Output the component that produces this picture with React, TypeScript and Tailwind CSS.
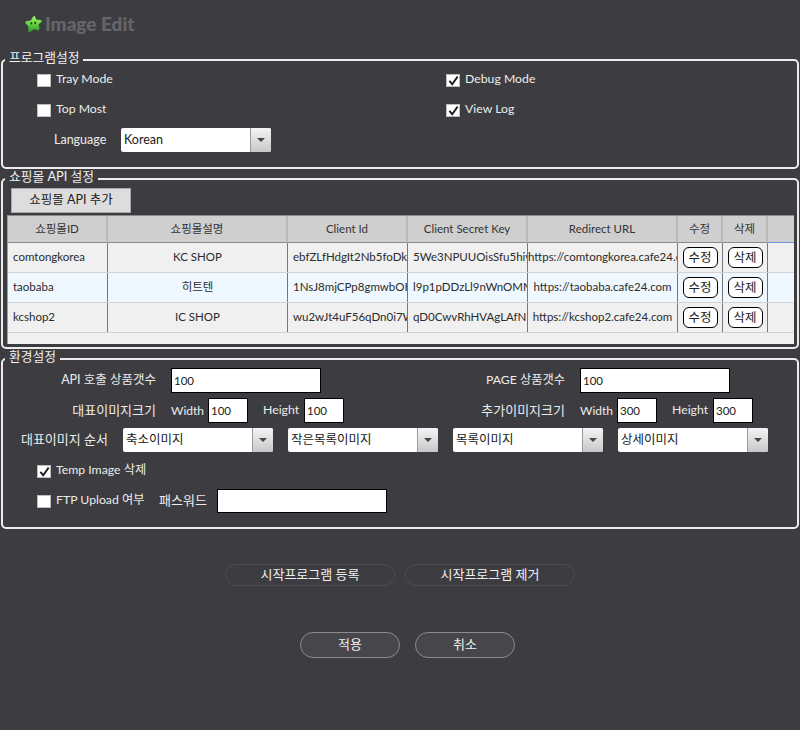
import type { ReactNode } from 'react'

const FONT = 'font-[Lato,"Noto_Sans_CJK_KR",sans-serif]'

const SHOPS = [
  {
    id: 'comtongkorea',
    name: 'KC SHOP',
    clientId: 'ebfZLfHdgIt2Nb5foDkpQ',
    secret: '5We3NPUUOisSfu5hiypXk2',
    url: 'https://comtongkorea.cafe24.com',
    bg: 'bg-[#f0f0f0]',
  },
  {
    id: 'taobaba',
    name: '히트텐',
    clientId: '1NsJ8mjCPp8gmwbOK8aT',
    secret: 'l9p1pDDzLl9nWnOMMvRe',
    url: 'https://taobaba.cafe24.com',
    bg: 'bg-[#f0f8ff]',
  },
  {
    id: 'kcshop2',
    name: 'IC SHOP',
    clientId: 'wu2wJt4uF56qDn0i7WtLc',
    secret: 'qD0CwvRhHVAgLAfNK8sY',
    url: 'https://kcshop2.cafe24.com',
    bg: 'bg-[#f0f0f0]',
  },
]

const HEADERS = ['쇼핑몰ID', '쇼핑몰설명', 'Client Id', 'Client Secret Key', 'Redirect URL', '수정', '삭제']

const TABLE_COLS = 'grid grid-cols-[100px_180px_120px_120px_150px_45px_45px_27px]'

function Group({ title, children }: { title: string; children: ReactNode }) {
  return (
    <fieldset className="mx-px min-w-0 rounded-[5px] border-2 border-[#ececec]">
      <legend className="ml-[2px] h-[18px] px-[4px] text-[12.75px] leading-[12px] text-[#f2f2f2]">{title}</legend>
      {children}
    </fieldset>
  )
}

function Check({ label, checked = false, className = '' }: { label: string; checked?: boolean; className?: string }) {
  return (
    <div className={`flex h-[13px] items-center ${className}`}>
      <span className="flex h-[13px] w-[14px] shrink-0 items-center justify-center border border-[#bdbdbd] bg-white">
        {checked && (
          <svg viewBox="0 0 12 12" className="h-[11px] w-[11px]">
            <path d="M1.5 6.5 L4.6 10 L10.5 1.8" fill="none" stroke="#1b1b1b" strokeWidth="2" />
          </svg>
        )}
      </span>
      <span className="ml-[5px] -translate-y-px whitespace-nowrap text-[12.25px] text-[#ececec]">{label}</span>
    </div>
  )
}

function Select({ value, className = '' }: { value: string; className?: string }) {
  return (
    <div className={`flex h-[24px] w-[150px] overflow-hidden rounded-[2px] bg-white ${className}`}>
      <span className="flex-1 pl-[3px] text-[12.5px] leading-[24px] text-[#1a1a1a]">{value}</span>
      <span className="flex w-[21px] items-center justify-center border-l border-[#9a9a9a] bg-gradient-to-b from-[#f4f4f4] to-[#c8c8c8]">
        <svg viewBox="0 0 8 4" className="h-[4px] w-[8px]">
          <path d="M0 0 H8 L4 4 Z" fill="#444" />
        </svg>
      </span>
    </div>
  )
}

function TextBox({ value = '', className }: { value?: string; className: string }) {
  return (
    <div className={`border border-black bg-white pl-[2px] text-[11.5px] leading-[23px] text-[#1a1a1a] ${className}`}>
      {value}
    </div>
  )
}

function Label({ children, className }: { children: ReactNode; className: string }) {
  return <span className={`whitespace-nowrap text-[#ececec] ${className}`}>{children}</span>
}

function SizeFields({ title, titleWidth, size }: { title: string; titleWidth: string; size: string }) {
  return (
    <>
      <Label className={`text-right text-[13px] ${titleWidth}`}>{title}</Label>
      <Label className="ml-[15px] w-[37px] text-[12px]">Width</Label>
      <TextBox value={size} className="h-[25px] w-[40px]" />
      <Label className="ml-[15px] w-[41px] text-[12.25px]">Height</Label>
      <TextBox value={size} className="h-[25px] w-[40px]" />
    </>
  )
}

function RowButton({ label }: { label: string }) {
  return (
    <button className="h-[21px] w-[35px] rounded-[6px] border border-black bg-white text-[12.5px] leading-[17px] text-[#222]">
      {label}
    </button>
  )
}

function OutlineButton({ label, className }: { label: string; className: string }) {
  return <button className={`rounded-full border text-[13px] text-[#f0f0f0] ${className}`}>{label}</button>
}

function Logo() {
  return (
    <svg viewBox="0 0 18 18" className="h-[18px] w-[17px]">
      <defs>
        <linearGradient id="star" x1="0" y1="0" x2="0" y2="1">
          <stop offset="0%" stopColor="#a4f56a" />
          <stop offset="55%" stopColor="#5fd03c" />
          <stop offset="100%" stopColor="#2f8f2c" />
        </linearGradient>
      </defs>
      <path
        d="M9.6 0.4 C10.8 0.2 11 3 11.8 4.2 C13.4 4.4 17.6 4.4 17.8 5.8 C17.8 7 15 8.6 14.4 9.6 C14.8 11.4 16 15 14.6 15.8 C13.2 16.2 11.2 14.6 9.8 14.6 C8 15.6 5 18.2 3.8 17.4 C2.8 16.6 3.8 13 3.6 11.4 C2.2 10 -0.2 8.4 0.4 7 C1 5.8 4.2 5.8 6 5.4 C7 3.8 8.4 0.8 9.6 0.4 Z"
        fill="url(#star)"
      />
      <ellipse cx="6.8" cy="8.2" rx="0.9" ry="1.3" fill="#123d12" />
      <ellipse cx="10.8" cy="8" rx="0.9" ry="1.3" fill="#123d12" />
    </svg>
  )
}

function ShopTable() {
  return (
    <div className="ml-[4px] mt-[2px] h-[129px] w-[787px] overflow-hidden border-l border-t border-l-[#8fa3c8] border-t-[#8a8a8a] bg-[#f0f0f0]">
      <div className={`${TABLE_COLS} h-[27px] bg-[#cfcfcf]`}>
        {HEADERS.map((h) => (
          <div key={h} className="border-b border-r-2 border-b-[#8a8a8a] border-r-[#b9b9b9] text-center text-[11.5px] leading-[25px] text-[#333]">
            {h}
          </div>
        ))}
        <div className="border-b border-r border-[#6f8fd6]" />
      </div>
      {SHOPS.map((shop) => (
        <div key={shop.id} className={`${TABLE_COLS} h-[30px] border-b border-[#d2d2d2] text-[11.5px] leading-[28px] text-[#2b2b2b] ${shop.bg}`}>
          <div className="overflow-hidden whitespace-nowrap border-r border-[#777] pl-[5px]">{shop.id}</div>
          <div className="overflow-hidden whitespace-nowrap border-r border-[#777] text-center">{shop.name}</div>
          <div className="overflow-hidden whitespace-nowrap border-r border-[#777] pl-[5px]">{shop.clientId}</div>
          <div className="overflow-hidden whitespace-nowrap border-r border-[#777] pl-[5px]">{shop.secret}</div>
          <div className="overflow-hidden whitespace-nowrap border-r border-[#777] text-center">{shop.url}</div>
          <div className="flex items-center justify-center border-r border-[#777]"><RowButton label="수정" /></div>
          <div className="flex items-center justify-center border-r border-[#777]"><RowButton label="삭제" /></div>
          <div />
        </div>
      ))}
    </div>
  )
}

export default function App() {
  return (
    <div className={`h-[730px] w-[800px] overflow-hidden bg-[#3d3d41] ${FONT}`}>
      <div className="flex h-[51px] items-start pl-[25px] pt-[15px]">
        <Logo />
        <span className="ml-[3px] text-[19px] font-black leading-[18px] text-[#66666a]">Image Edit</span>
      </div>

      <Group title="프로그램설정">
        <div className="flex pl-[34px] pt-[5px]">
          <div className="w-[409px]"><Check label="Tray Mode" /></div>
          <Check label="Debug Mode" checked />
        </div>
        <div className="flex pl-[34px] pt-[17px]">
          <div className="w-[409px]"><Check label="Top Most" /></div>
          <Check label="View Log" checked />
        </div>
        <div className="flex items-center pb-[15px] pl-[51px] pt-[11px]">
          <Label className="w-[67px] text-[12.5px]">Language</Label>
          <Select value="Korean" />
        </div>
      </Group>

      <div className="mt-px">
        <Group title="쇼핑몰 API 설정">
          <button className="ml-[8px] block h-[25px] w-[120px] border border-[#a9a9a9] bg-[#dddddd] text-[12.5px] text-[#222]">
            쇼핑몰 API 추가
          </button>
          <ShopTable />
          <div className="h-[3px]" />
        </Group>
      </div>

      <div className="mt-px">
        <Group title="환경설정">
          <div className="flex h-[25px] items-center">
            <Label className="w-[153px] text-right text-[12.5px]">API 호출 상품갯수</Label>
            <TextBox value="100" className="ml-[15px] h-[25px] w-[150px]" />
            <Label className="w-[244px] text-right text-[12.25px]">PAGE 상품갯수</Label>
            <TextBox value="100" className="ml-[15px] h-[25px] w-[150px]" />
          </div>
          <div className="mt-[5px] flex h-[25px] items-center">
            <SizeFields title="대표이미지크기" titleWidth="w-[153px]" size="100" />
            <SizeFields title="추가이미지크기" titleWidth="w-[221px]" size="300" />
          </div>
          <div className="mt-[5px] flex items-center gap-[15px]">
            <Label className="w-[105px] text-right text-[13px]">대표이미지 순서</Label>
            <Select value="축소이미지" />
            <Select value="작은목록이미지" />
            <Select value="목록이미지" />
            <Select value="상세이미지" />
          </div>
          <div className="pl-[34px] pt-[13px]">
            <Check label="Temp Image 삭제" checked />
          </div>
          <div className="mt-[11px] flex h-[24px] items-center pl-[34px]">
            <Check label="FTP Upload 여부" className="w-[107px] shrink-0" />
            <Label className="ml-[15px] w-[58px] text-[13px]">패스워드</Label>
            <TextBox className="h-[24px] w-[170px]" />
          </div>
          <div className="h-[14px]" />
        </Group>
      </div>

      <div className="mt-[35px] flex justify-center gap-[10px]">
        <OutlineButton label="시작프로그램 등록" className="h-[22px] w-[170px] border-[#4d4d52]" />
        <OutlineButton label="시작프로그램 제거" className="h-[22px] w-[170px] border-[#4d4d52]" />
      </div>
      <div className="mt-[46px] flex gap-[15px] pl-[300px]">
        <OutlineButton label="적용" className="h-[26px] w-[100px] border-[#8c8c8c] bg-[#47474b]" />
        <OutlineButton label="취소" className="h-[26px] w-[100px] border-[#8c8c8c] bg-[#47474b]" />
      </div>
    </div>
  )
}
